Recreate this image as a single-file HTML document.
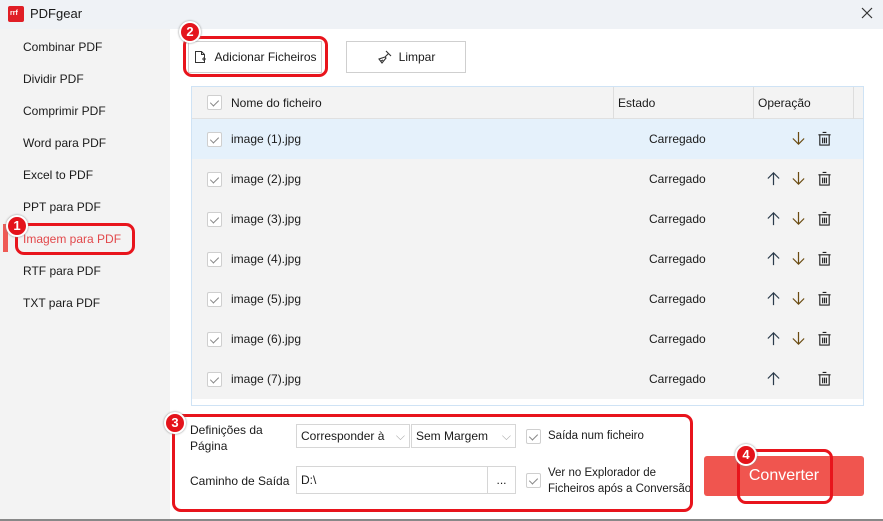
<!DOCTYPE html><html><head><meta charset="utf-8"><style>
*{box-sizing:border-box;margin:0;padding:0}
body{width:883px;height:521px;overflow:hidden;font-family:"Liberation Sans",sans-serif;font-size:12px;color:#1a1a1a;background:#fff;position:relative}
.a{position:absolute}
.title{left:0;top:0;width:883px;height:29px;background:#eff2f6}
.side{left:0;top:29px;width:170px;height:492px;background:#f3f3f3}
.nav{left:23px;font-size:12px}
.badge{position:absolute;width:22px;height:22px;border-radius:50%;background:#e4131b;border:2px solid #fff;color:#fff;font-weight:bold;font-size:13px;text-align:center;line-height:18px;box-shadow:0 0 2px #888}
.rbox{position:absolute;border:3px solid #e8141c;border-radius:9px}
.btn{position:absolute;background:#fff;border:1px solid #cfcfcf;font-size:12px;display:flex;align-items:center;justify-content:center}
.tbl{left:191px;top:86px;width:673px;height:320px;background:#f3f3f3;border:1px solid #cfe3f5}
.row{position:absolute;left:0;width:671px;height:40px}
.cb{position:absolute;left:15px;width:15px;height:15px;border:1px solid #cfcfcf;background:#fff;border-radius:2px}
.cb:after{content:"";position:absolute;left:4px;top:2px;width:4px;height:7px;border:solid #888;border-width:0 1px 1px 0;transform:rotate(45deg)}
.fn{position:absolute;left:39px}
.st{position:absolute;left:457px}
.ic{position:absolute;top:12px}
.inp{position:absolute;background:#fff;border:1px solid #d6d6d6;font-size:12px;padding-left:4px;display:flex;align-items:center}
</style></head><body>
<svg width="0" height="0" style="position:absolute"><defs>
<symbol id="up" viewBox="0 0 16 16"><path d="M8 15V2M2 8l6-6 6 6" fill="none" stroke="#2a3a4a" stroke-width="1.3"/></symbol>
<symbol id="dn" viewBox="0 0 16 16"><path d="M8 1v13M2 8l6 6 6-6" fill="none" stroke="#6a4a10" stroke-width="1.3"/></symbol>
<symbol id="tr" viewBox="0 0 16 16"><path d="M6 1.5h4M1.5 4h13M3 4v11h10V4M6 7v6M8 7v6M10 7v6" fill="none" stroke="#222" stroke-width="1.2"/></symbol>
</defs></svg>
<div class="a title"></div>
<div class="a" style="left:8px;top:6px;width:16px;height:16px;background:#e01e26;border-radius:2px"><span style="position:absolute;left:2px;top:4px;font-size:7px;color:#fff;font-weight:bold">rrf</span></div>
<div class="a" style="left:30px;top:6px;font-size:13px">PDFgear</div>
<svg class="a" style="left:861px;top:7px" width="12" height="12"><path d="M1 1l10 10M11 1L1 11" stroke="#333" stroke-width="1.2"/></svg>
<div class="a side"></div>
<div class="a nav" style="top:40px">Combinar PDF</div>
<div class="a nav" style="top:72px">Dividir PDF</div>
<div class="a nav" style="top:104px">Comprimir PDF</div>
<div class="a nav" style="top:136px">Word para PDF</div>
<div class="a nav" style="top:168px">Excel to PDF</div>
<div class="a nav" style="top:200px">PPT para PDF</div>
<div class="a" style="left:3px;top:224px;width:5px;height:28px;background:#ef5a55"></div>
<div class="a nav" style="top:232px;color:#e2484b">Imagem para PDF</div>
<div class="a nav" style="top:264px">RTF para PDF</div>
<div class="a nav" style="top:296px">TXT para PDF</div>
<div class="rbox" style="left:15px;top:223px;width:120px;height:32px"></div>
<div class="badge" style="left:6px;top:215px">1</div>

<div class="btn" style="left:188px;top:41px;width:134px;height:32px"><svg width="14" height="14" viewBox="0 0 14 14" style="margin-right:7px"><path d="M2.5 1.5h6l3 3v8h-9z M8.5 1.5v3h3" fill="none" stroke="#333"/><path d="M9 9h4M11 7v4" stroke="#333"/></svg>Adicionar Ficheiros</div>
<div class="rbox" style="left:183px;top:36px;width:145px;height:41px"></div>
<div class="badge" style="left:179px;top:21px">2</div>
<div class="btn" style="left:346px;top:41px;width:120px;height:32px"><svg width="16" height="14" viewBox="0 0 16 14" style="margin-right:6px"><path d="M9 1l5 5M11.5 3.5L8 7M8 7l-6 2 3 4 4-5zM4 11l2-1" fill="none" stroke="#333" stroke-width="1.1"/></svg>Limpar</div>

<div class="a tbl">
<div class="row" style="top:0;height:32px;border-bottom:1px solid #e0e0e0"><div class="cb" style="top:8px"></div><div class="fn" style="top:9px">Nome do ficheiro</div><div class="a" style="left:421px;top:0;height:32px;border-left:1px solid #ddd"></div><div class="a" style="left:426px;top:9px">Estado</div><div class="a" style="left:561px;top:0;height:32px;border-left:1px solid #ddd"></div><div class="a" style="left:566px;top:9px">Operação</div><div class="a" style="left:661px;top:0;height:32px;border-left:1px solid #ddd"></div></div>
<div class="row" style="top:32px;background:#e5f1fb"><div class="cb" style="top:13px"></div><div class="fn" style="top:13px">image (1).jpg</div><div class="st" style="top:13px">Carregado</div><svg class="ic" style="left:599px" width="15" height="15"><use href="#dn"/></svg><svg class="ic" style="left:625px" width="15" height="15"><use href="#tr"/></svg></div>
<div class="row" style="top:72px"><div class="cb" style="top:13px"></div><div class="fn" style="top:13px">image (2).jpg</div><div class="st" style="top:13px">Carregado</div><svg class="ic" style="left:574px" width="15" height="15"><use href="#up"/></svg><svg class="ic" style="left:599px" width="15" height="15"><use href="#dn"/></svg><svg class="ic" style="left:625px" width="15" height="15"><use href="#tr"/></svg></div>
<div class="row" style="top:112px"><div class="cb" style="top:13px"></div><div class="fn" style="top:13px">image (3).jpg</div><div class="st" style="top:13px">Carregado</div><svg class="ic" style="left:574px" width="15" height="15"><use href="#up"/></svg><svg class="ic" style="left:599px" width="15" height="15"><use href="#dn"/></svg><svg class="ic" style="left:625px" width="15" height="15"><use href="#tr"/></svg></div>
<div class="row" style="top:152px"><div class="cb" style="top:13px"></div><div class="fn" style="top:13px">image (4).jpg</div><div class="st" style="top:13px">Carregado</div><svg class="ic" style="left:574px" width="15" height="15"><use href="#up"/></svg><svg class="ic" style="left:599px" width="15" height="15"><use href="#dn"/></svg><svg class="ic" style="left:625px" width="15" height="15"><use href="#tr"/></svg></div>
<div class="row" style="top:192px"><div class="cb" style="top:13px"></div><div class="fn" style="top:13px">image (5).jpg</div><div class="st" style="top:13px">Carregado</div><svg class="ic" style="left:574px" width="15" height="15"><use href="#up"/></svg><svg class="ic" style="left:599px" width="15" height="15"><use href="#dn"/></svg><svg class="ic" style="left:625px" width="15" height="15"><use href="#tr"/></svg></div>
<div class="row" style="top:232px"><div class="cb" style="top:13px"></div><div class="fn" style="top:13px">image (6).jpg</div><div class="st" style="top:13px">Carregado</div><svg class="ic" style="left:574px" width="15" height="15"><use href="#up"/></svg><svg class="ic" style="left:599px" width="15" height="15"><use href="#dn"/></svg><svg class="ic" style="left:625px" width="15" height="15"><use href="#tr"/></svg></div>
<div class="row" style="top:272px"><div class="cb" style="top:13px"></div><div class="fn" style="top:13px">image (7).jpg</div><div class="st" style="top:13px">Carregado</div><svg class="ic" style="left:574px" width="15" height="15"><use href="#up"/></svg><svg class="ic" style="left:625px" width="15" height="15"><use href="#tr"/></svg></div>
<div class="row" style="top:312px;height:6px;background:#fff"></div>
</div>

<div class="a" style="left:190px;top:422px;line-height:16px">Definições da<br>Página</div>
<div class="inp" style="left:296px;top:424px;width:114px;height:24px">Corresponder à<span style="margin-left:auto;margin-right:4px;color:#aaa">⌵</span></div>
<div class="inp" style="left:411px;top:424px;width:105px;height:24px">Sem Margem<span style="margin-left:auto;margin-right:4px;color:#aaa">⌵</span></div>
<div class="a" style="left:526px;top:429px;width:15px;height:15px"><div class="cb" style="left:0;top:0"></div></div>
<div class="a" style="left:548px;top:430px;font-size:11.5px">Saída num ficheiro</div>
<div class="a" style="left:190px;top:474px">Caminho de Saída</div>
<div class="inp" style="left:296px;top:466px;width:192px;height:28px">D:\</div>
<div class="inp" style="left:487px;top:466px;width:29px;height:28px;justify-content:center;padding:0">...</div>
<div class="a" style="left:526px;top:473px;width:15px;height:15px"><div class="cb" style="left:0;top:0"></div></div>
<div class="a" style="left:548px;top:465px;line-height:16px;font-size:11.5px">Ver no Explorador de<br>Ficheiros após a Conversão</div>
<div class="rbox" style="left:172px;top:414px;width:521px;height:98px"></div>
<div class="badge" style="left:164px;top:412px">3</div>

<div class="a" style="left:704px;top:456px;width:160px;height:40px;background:#f0554f;border-radius:3px;color:#fff;font-size:16px;text-align:center;line-height:40px">Converter</div>
<div class="rbox" style="left:737px;top:449px;width:96px;height:55px"></div>
<div class="badge" style="left:735px;top:444px">4</div>
<div class="a" style="left:0;top:519px;width:883px;height:2px;background:#888"></div>
</body></html>
